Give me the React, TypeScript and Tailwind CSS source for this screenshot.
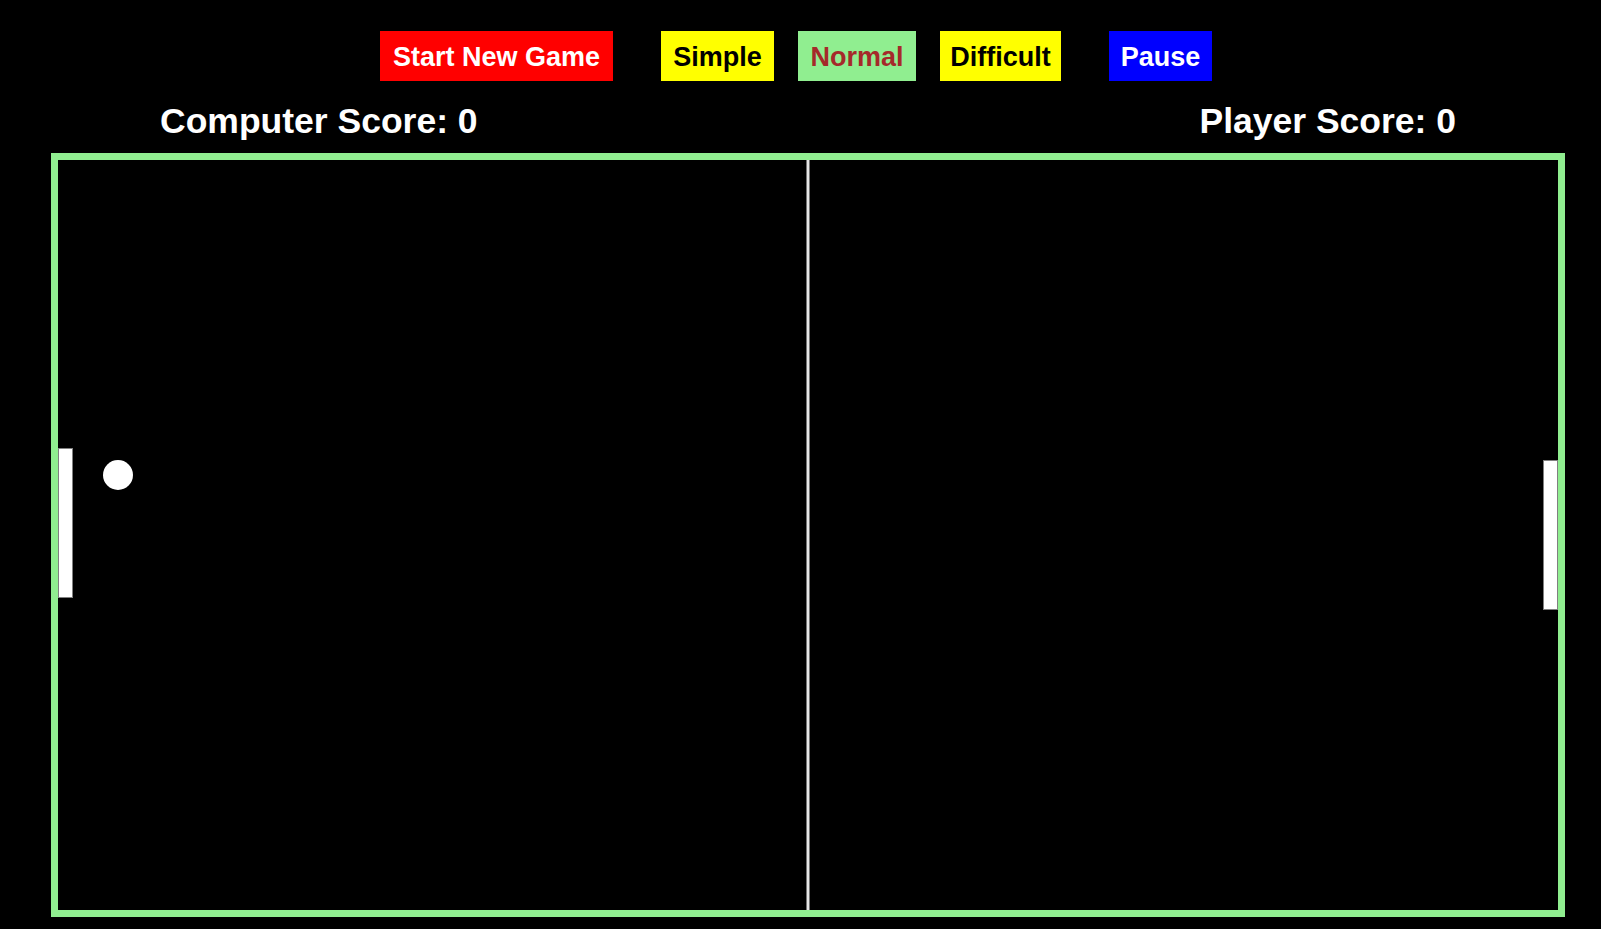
const buttons = [
  { label: "Start New Game", className: "w-[233px] bg-[#ff0000] text-white" },
  { label: "Simple", className: "w-[113px] ml-[48px] bg-[#ffff00] text-black" },
  { label: "Normal", className: "w-[118px] ml-[24px] bg-[#90ee90] text-[#a52a2a]" },
  { label: "Difficult", className: "w-[121px] ml-[24px] bg-[#ffff00] text-black" },
  { label: "Pause", className: "w-[103px] ml-[48px] bg-[#0000ff] text-white" },
];

const Board = () => {
  // canvas is 1500 x 750, drawn as svg
  return (
    <svg width="1500" height="750" viewBox="0 0 1500 750" className="block">
      <rect x="0" y="0" width="1500" height="750" fill="#000" />
      <rect x="748.5" y="0" width="3" height="750" fill="#e6e6e6" />
      <rect x="0.5" y="288.5" width="14" height="149" fill="#fff" stroke="#808080" strokeWidth="1" />
      <rect x="1485.5" y="300.5" width="14" height="149" fill="#fff" stroke="#808080" strokeWidth="1" />
      <circle cx="60" cy="315" r="15" fill="#fff" />
    </svg>
  );
};

export default function App() {
  return (
    <div
      className="min-h-[929px] w-full bg-black font-bold"
      style={{ fontFamily: '"Liberation Sans", Arial, sans-serif' }}
    >
      <div className="flex justify-center pt-[31px] pr-[9px]">
        {buttons.map((b) => (
          <button
            key={b.label}
            className={`h-[50px] pt-[2px] flex items-center justify-center text-[27px] leading-none ${b.className}`}
          >
            {b.label}
          </button>
        ))}
      </div>
      <div className="mt-[20px] flex justify-between pl-[160px] pr-[145px] h-[40px] text-[35.5px] leading-[40px] text-white">
        <span>Computer Score: 0</span>
        <span>Player Score: 0</span>
      </div>
      <div className="mt-[12px] ml-[51px] w-[1514px] border-[7px] border-[#90ee90]">
        <Board />
      </div>
    </div>
  );
}
